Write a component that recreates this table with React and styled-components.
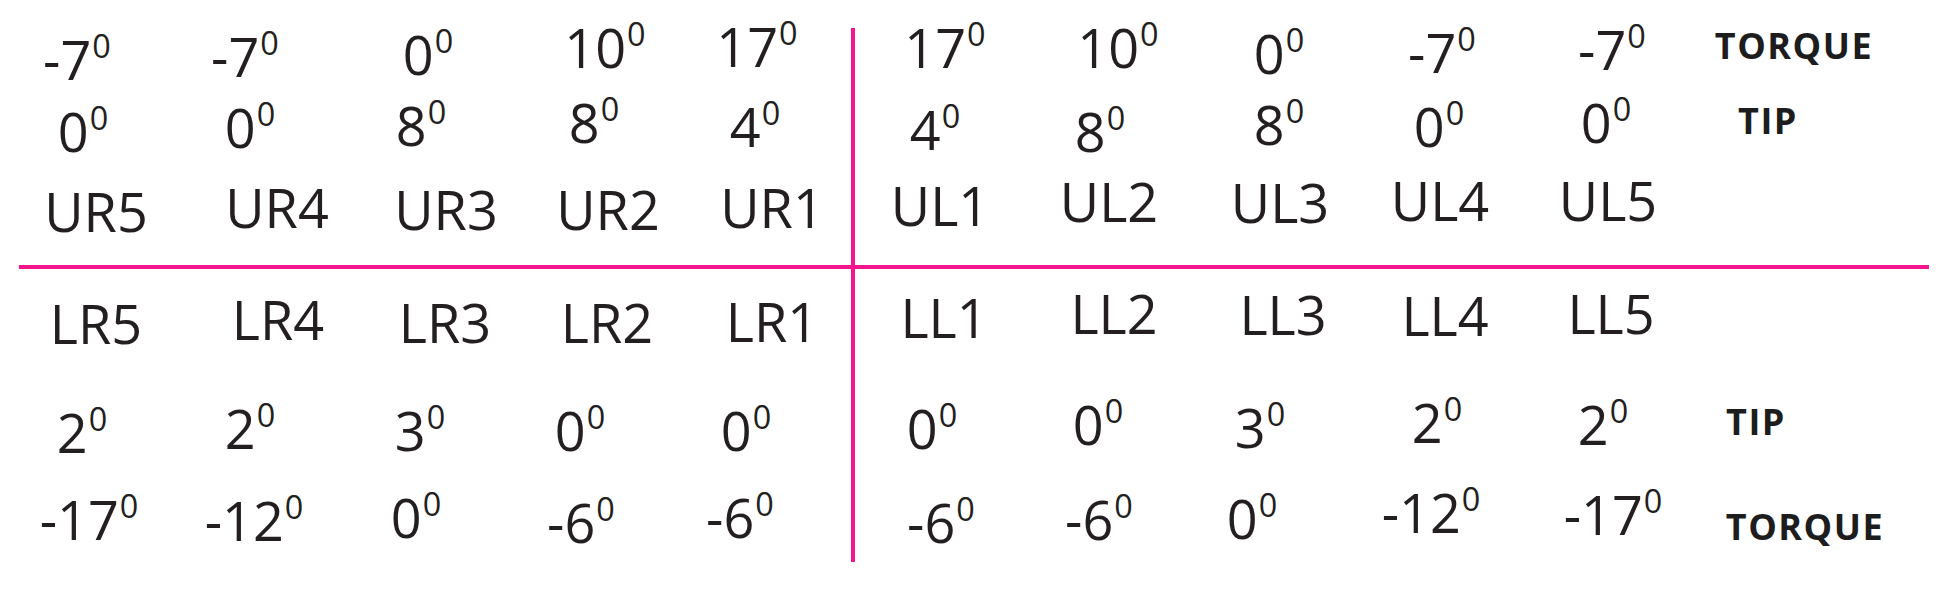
import React from 'react';
import styled, { createGlobalStyle } from 'styled-components';

const GlobalStyle = createGlobalStyle`
    html, body {
        margin: 0;
        padding: 0;
        background: #ffffff;
    }
    body {
        font-family: "Open Sans", "Noto Sans", "Liberation Sans", sans-serif;
        color: #231f20;
    }
`;

const PINK = '#f5158d';

const Page = styled.div`
    width: 1958px;
    height: 590px;
    padding: 24px 0 0 19px;
    box-sizing: border-box;
    overflow: hidden;
`;

const Chart = styled.div`
    display: grid;
    width: 1910px;
    grid-template-columns: 153px 168px 170px 170px 172px 3px 165px 170px 165px 170px 165px 239px;
    grid-template-rows: 74px 78px 89px 4px 109px 90px 94px;
`;

const Divider = styled.div`
    grid-column: 6;
    grid-row: 1 / 8;
    margin: 4px 0 0 -1px;
    width: 4px;
    background: ${PINK};
`;

const Rule = styled.div`
    grid-column: 1 / -1;
    grid-row: 4;
    height: 4px;
    background: ${PINK};
`;

const Cell = styled.div`
    padding-top: ${p => p.$pad}px;
    font-size: 54px;
    line-height: 58px;
    font-weight: 400;
    text-align: center;
    white-space: nowrap;
    transform: translate(${p => p.$dx}px, ${p => p.$dy}px);
`;

const Label = styled.div`
    padding-top: ${p => p.$pad}px;
    font-size: 36px;
    line-height: 60px;
    font-weight: 700;
    letter-spacing: 1.5px;
    text-align: center;
    white-space: nowrap;
    color: #1d1d1d;
    transform: translate(${p => p.$dx}px, ${p => p.$dy}px);
`;

const Sup = styled.span`
    position: relative;
    top: -0.68em;
    margin-left: 1px;
    font-size: 0.6em;
    vertical-align: baseline;
`;

const rows = [
    {
        pad: 0,
        deg: true,
        cells: ['-7', '-7', '0', '10', '17', '17', '10', '0', '-7', '-7'],
        dx: [-18.5, -11, 3, 10, -9, 7.5, 13, 6.5, 2, 4.5],
        dy: [6, 3, 1, -6, -7, -6, -6, 0, -1, -4],
        label: { text: 'TORQUE', dx: -15.5, dy: -8 },
    },
    {
        pad: 0,
        deg: true,
        cells: ['0', '0', '8', '8', '4', '4', '8', '8', '0', '0'],
        dx: [-12.5, -6, -4, -1, -11, -2.5, -5, 6.5, -1, -1.5],
        dy: [4, 0, -2, -5, -1, 2, 4, -3, -1, -5],
        label: { text: 'TIP', dx: -41.5, dy: -7 },
    },
    {
        pad: 0,
        deg: false,
        cells: ['UR5', 'UR4', 'UR3', 'UR2', 'UR1', 'UL1', 'UL2', 'UL3', 'UL4', 'UL5'],
        dx: [0.5, 21, 21, 13, 6, 2.5, 4, 7.5, 0, 0.5],
        dy: [6, 2, 4, 4, 2, 0, -4, -3, -5, -5],
        label: null,
    },
    {
        pad: 20,
        deg: false,
        cells: ['LR5', 'LR4', 'LR3', 'LR2', 'LR1', 'LL1', 'LL2', 'LL3', 'LL4', 'LL5'],
        dx: [0.5, 22, 20, 12, 6, 6.5, 9, 10.5, 5, 3.5],
        dy: [5, 1, 4, 4, 3, -1, -5, -4, -3, -5],
        label: null,
    },
    {
        pad: 20,
        deg: true,
        cells: ['2', '2', '3', '0', '0', '0', '0', '3', '2', '2'],
        dx: [-13.5, -6, -5, -15, -20, -5.5, -7, -12.5, -3, -4.5],
        dy: [5, 1, 3, 3, 3, 1, -3, 0, -5, -3],
        label: { text: 'TIP', dx: -53.5, dy: -6 },
    },
    {
        pad: 21,
        deg: true,
        cells: ['-17', '-12', '0', '-6', '-6', '-6', '-6', '0', '-12', '-17'],
        dx: [-6.5, -2, -9, -14, -26, 3.5, -6, -20.5, -9, 5.5],
        dy: [1, 2, -1, 4, -1, 4, 1, 0, -6, -4],
        label: { text: 'TORQUE', dx: -4.5, dy: 8 },
    },
];

function Row({ row }) {
    return (
        <>
            {row.cells.map((value, i) => (
                <Cell key={i} $pad={row.pad} $dx={row.dx[i]} $dy={row.dy[i]}>
                    {value}
                    {row.deg && <Sup>0</Sup>}
                </Cell>
            ))}
            {row.label ? (
                <Label $pad={row.pad} $dx={row.label.dx} $dy={row.label.dy}>
                    {row.label.text}
                </Label>
            ) : (
                <Label $pad={0} $dx={0} $dy={0} />
            )}
        </>
    );
}

function App() {
    return (
        <Page>
            <GlobalStyle />
            <Chart>
                <Divider />
                <Rule />
                {rows.map((row, i) => (
                    <Row key={i} row={row} />
                ))}
            </Chart>
        </Page>
    );
}

export default App;
